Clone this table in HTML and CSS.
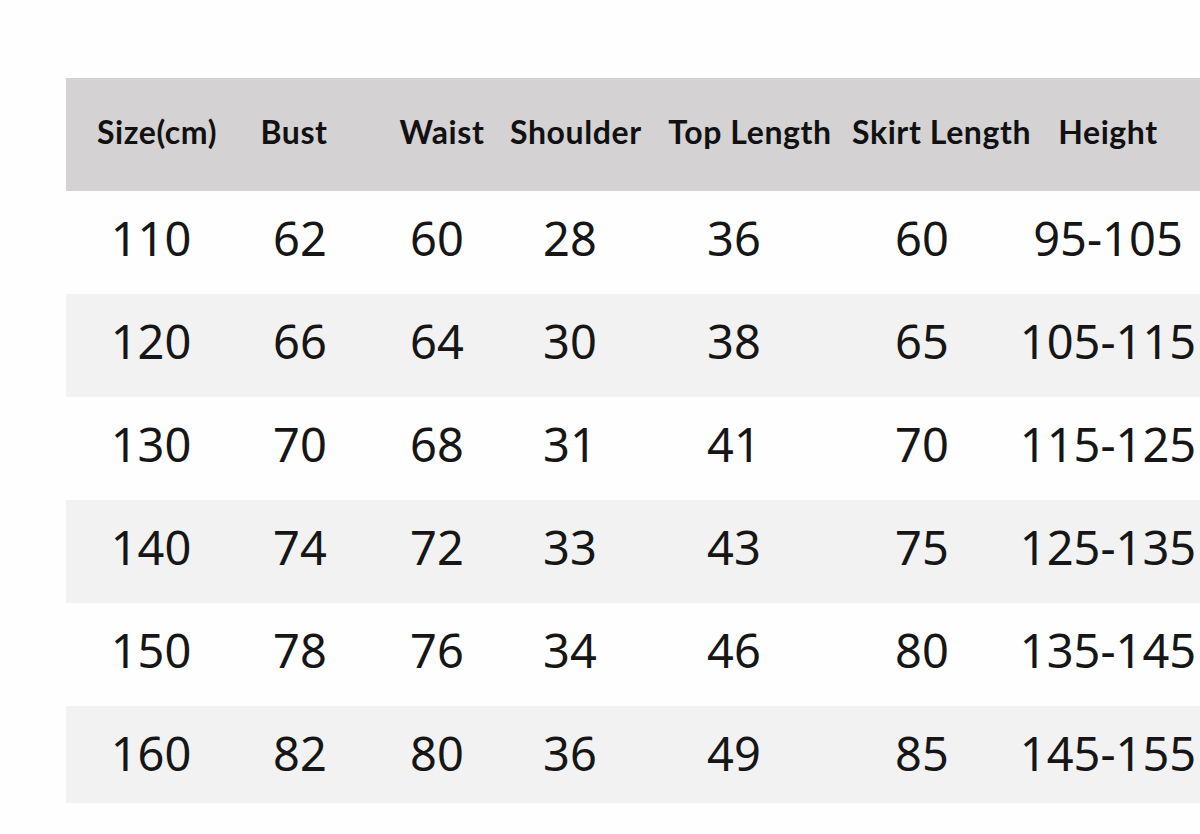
FILE: index.html
```html
<!DOCTYPE html>
<html>
<head>
<meta charset="utf-8">
<link rel="stylesheet" href="styles.css">
</head>
<body>
<div class="page">
  <div class="chart">
    <div class="row head">
      <div class="cell c1">Size(cm)</div>
      <div class="cell c2">Bust</div>
      <div class="cell c3">Waist</div>
      <div class="cell c4">Shoulder</div>
      <div class="cell c5">Top Length</div>
      <div class="cell c6">Skirt Length</div>
      <div class="cell c7">Height</div>
    </div>
    <div class="row">
      <div class="cell">110</div><div class="cell">62</div><div class="cell">60</div><div class="cell">28</div><div class="cell">36</div><div class="cell">60</div><div class="cell">95-105</div>
    </div>
    <div class="row alt">
      <div class="cell">120</div><div class="cell">66</div><div class="cell">64</div><div class="cell">30</div><div class="cell">38</div><div class="cell">65</div><div class="cell">105-115</div>
    </div>
    <div class="row">
      <div class="cell">130</div><div class="cell">70</div><div class="cell">68</div><div class="cell">31</div><div class="cell">41</div><div class="cell">70</div><div class="cell">115-125</div>
    </div>
    <div class="row alt">
      <div class="cell">140</div><div class="cell">74</div><div class="cell">72</div><div class="cell">33</div><div class="cell">43</div><div class="cell">75</div><div class="cell">125-135</div>
    </div>
    <div class="row">
      <div class="cell">150</div><div class="cell">78</div><div class="cell">76</div><div class="cell">34</div><div class="cell">46</div><div class="cell">80</div><div class="cell">135-145</div>
    </div>
    <div class="row alt last">
      <div class="cell">160</div><div class="cell">82</div><div class="cell">80</div><div class="cell">36</div><div class="cell">49</div><div class="cell">85</div><div class="cell">145-155</div>
    </div>
  </div>
</div>
</body>
</html>
```

FILE: styles.css
```css
html, body {
  margin: 0;
  padding: 0;
  background: #fefefe;
  overflow: hidden;
}
.page {
  width: 1200px;
  height: 834px;
  overflow: hidden;
  padding-top: 78px;
  padding-left: 66px;
  box-sizing: border-box;
}
.chart {
  width: 1144px;
}
.row {
  display: grid;
  grid-template-columns: 170px 128px 146px 120px 208px 168px 204px;
  height: 103px;
  align-items: center;
  padding-bottom: 9px;
  box-sizing: border-box;
  font-family: "Noto Sans", "Open Sans", sans-serif;
  font-size: 47px;
  color: #161616;
}
.row.alt {
  background: #f2f2f2;
}
.row.last {
  height: 97px;
  padding-bottom: 3px;
}
.cell {
  text-align: center;
  white-space: nowrap;
}
.row.head {
  height: 113px;
  padding-bottom: 7px;
  background: #d4d2d3;
  font-family: "Lato", "Open Sans", sans-serif;
  font-weight: 700;
  font-size: 32px;
  color: #111;
  letter-spacing: 0.6px;
}
.head .c1 { padding-left: 12px; }
.head .c2 { padding-right: 12px; }
.head .c3 { padding-left: 10px; }
.head .c5 { padding-left: 32px; }
.head .c6 { padding-left: 14px; }
```
